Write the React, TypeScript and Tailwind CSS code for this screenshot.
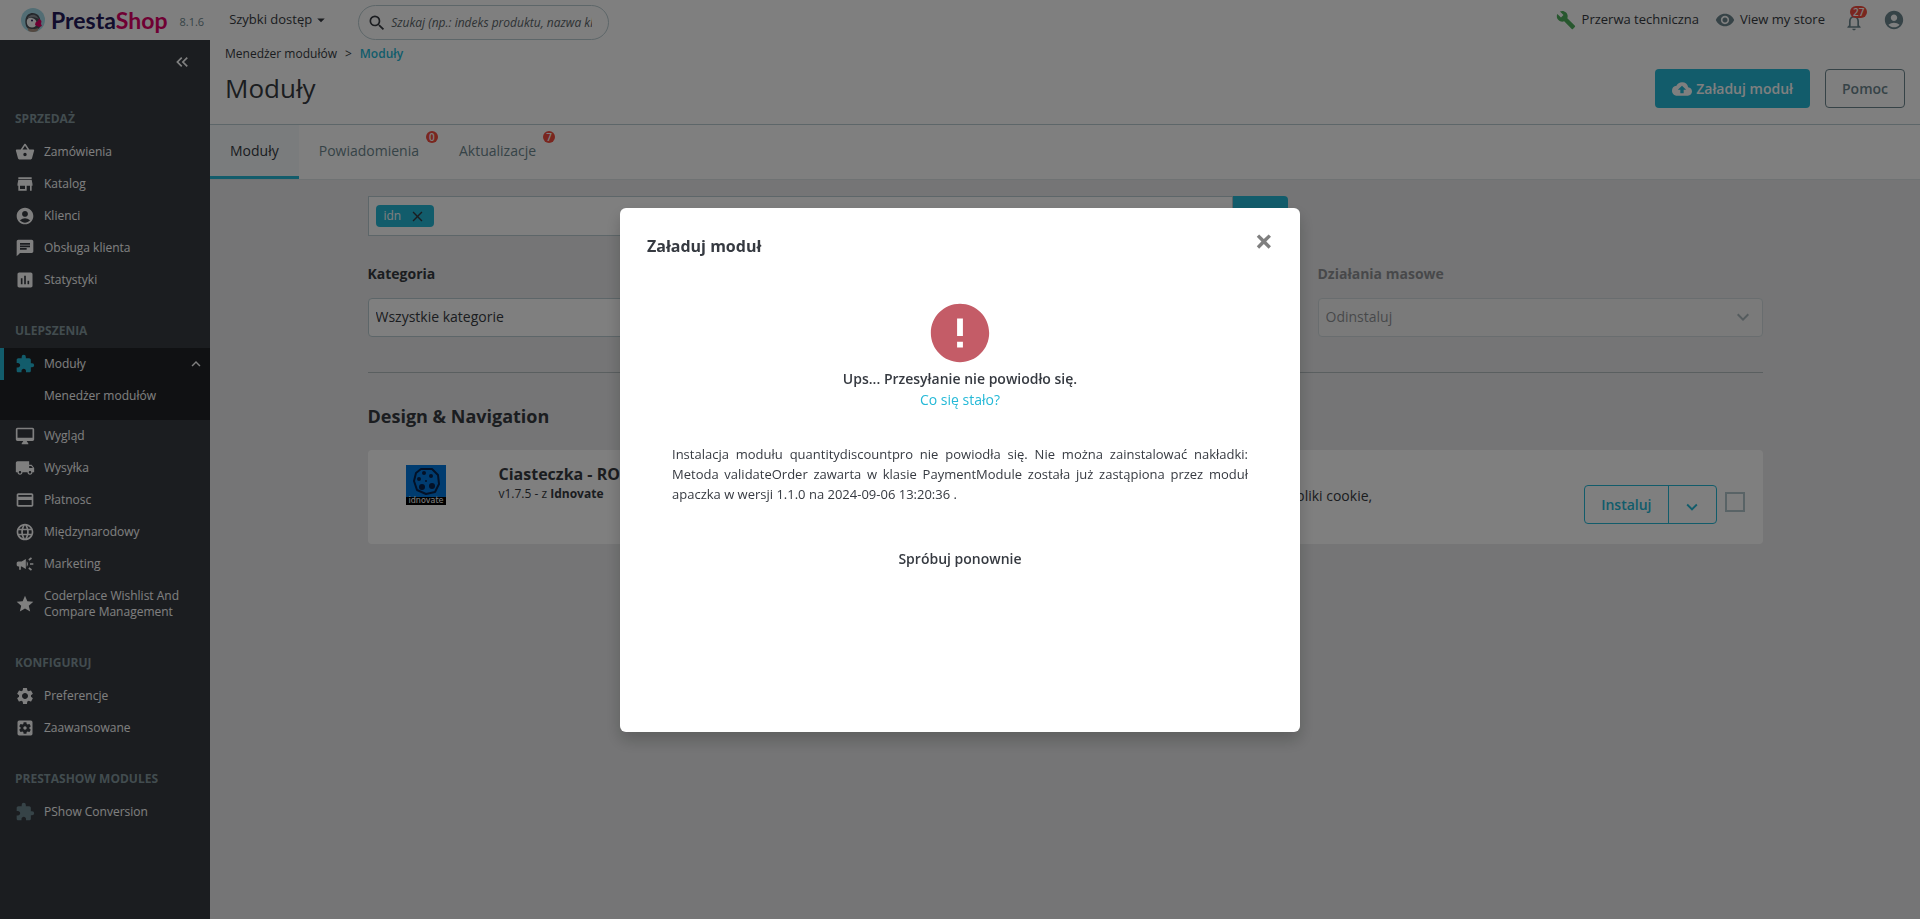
import type { ReactNode } from 'react'
import type { IconType } from 'react-icons'
import {
  MdAccountCircle,
  MdArrowDropDown,
  MdAssessment,
  MdBuild,
  MdCampaign,
  MdChat,
  MdClose,
  MdCloudUpload,
  MdCreditCard,
  MdError,
  MdExtension,
  MdKeyboardArrowDown,
  MdKeyboardArrowUp,
  MdKeyboardDoubleArrowLeft,
  MdLanguage,
  MdLocalShipping,
  MdNotificationsNone,
  MdOutlineDesktopMac,
  MdSearch,
  MdSettings,
  MdSettingsApplications,
  MdShoppingBasket,
  MdStar,
  MdStore,
  MdVisibility,
} from 'react-icons/md'

interface NavItem {
  label: string
  icon: IconType
  children?: string[]
  muted?: boolean
}

interface NavSection {
  title: string
  items: NavItem[]
}

const NAV: NavSection[] = [
  {
    title: 'SPRZEDAŻ',
    items: [
      { label: 'Zamówienia', icon: MdShoppingBasket },
      { label: 'Katalog', icon: MdStore },
      { label: 'Klienci', icon: MdAccountCircle },
      { label: 'Obsługa klienta', icon: MdChat },
      { label: 'Statystyki', icon: MdAssessment },
    ],
  },
  {
    title: 'ULEPSZENIA',
    items: [
      { label: 'Moduły', icon: MdExtension, children: ['Menedżer modułów'] },
      { label: 'Wygląd', icon: MdOutlineDesktopMac },
      { label: 'Wysyłka', icon: MdLocalShipping },
      { label: 'Płatnosc', icon: MdCreditCard },
      { label: 'Międzynarodowy', icon: MdLanguage },
      { label: 'Marketing', icon: MdCampaign },
      { label: 'Coderplace Wishlist And Compare Management', icon: MdStar },
    ],
  },
  {
    title: 'KONFIGURUJ',
    items: [
      { label: 'Preferencje', icon: MdSettings },
      { label: 'Zaawansowane', icon: MdSettingsApplications },
    ],
  },
  {
    title: 'PRESTASHOW MODULES',
    items: [{ label: 'PShow Conversion', icon: MdExtension, muted: true }],
  },
]

const TABS = [
  { label: 'Moduły', active: true },
  { label: 'Powiadomienia', count: 0 },
  { label: 'Aktualizacje', count: 7 },
]

function Mascot() {
  return (
    <svg viewBox="0 0 48 48" className="size-6" aria-hidden="true">
      <circle cx="24" cy="24" r="24" fill="#a4dbe8" />
      <path d="M11 38c-4-9-3-19 3-25 6-5 16-4 21 2 4 5 5 13 4 22l-4 5H15z" fill="#4a4f56" />
      <path d="M12 24c2-4 6-5 10-4 6 1 9 5 9 10 0 6-4 9-9 9-7 0-12-6-10-15z" fill="#fff" />
      <path d="M13 20c3-6 12-9 18-4l5 6c-7-4-15-5-23-2z" fill="#8b9197" />
      <circle cx="22" cy="25" r="2" fill="#251b5b" />
      <path d="M29 29l5-3 2-5 5 5-1 6 2 4-6 2-4-2-4-2z" fill="#df0067" />
      <path d="M13 40c7 3 15 3 22 0l-2 6a24 24 0 0 1-18 0z" fill="#a89080" />
    </svg>
  )
}

function Header() {
  return (
    <header className="flex h-10 items-center bg-white text-[13px] text-[#363a41]">
      <a href="#" className="ml-[21px] flex items-center gap-[6px]" aria-label="PrestaShop">
        <Mascot />
        <span className="font-[Lato,sans-serif] text-[23px] leading-6 font-bold text-[#251b5b]">
          Presta<span className="text-[#df0067]">Shop</span>
        </span>
      </a>
      <span className="mt-1 ml-3 text-[11px] text-[#6c868e]">8.1.6</span>
      <button className="ml-[25px] flex items-center">
        Szybki dostęp
        <MdArrowDropDown className="size-[18px]" />
      </button>
      <form className="ml-[28px] flex h-[35px] w-[251px] items-center self-end rounded-full border border-[#bbcdd2] pr-4 pl-2">
        <MdSearch className="mr-1 size-5 shrink-0" />
        <input
          type="text"
          aria-label="Szukaj"
          placeholder="Szukaj (np.: indeks produktu, nazwa klienta...)"
          className="min-w-0 flex-1 text-xs italic outline-none placeholder:text-[#5b6569]"
        />
      </form>
      <div className="ml-auto flex items-center">
        <a href="#" className="flex items-center gap-[6px]">
          <MdBuild className="size-5 text-[#4fae5c]" />
          Przerwa techniczna
        </a>
        <a href="#" className="ml-4 flex items-center gap-[5px]">
          <MdVisibility className="size-5 text-[#6c868e]" />
          View my store
        </a>
        <button aria-label="Powiadomienia" className="relative mt-1 ml-[19px]">
          <MdNotificationsNone className="size-5 text-[#6c868e]" />
          <span className="absolute -top-[6px] left-[6px] rounded-full bg-[#f54c3e] px-[3px] text-[10px] leading-3 font-semibold text-white">
            27
          </span>
        </button>
        <button aria-label="Konto" className="mr-[15px] ml-[19px]">
          <MdAccountCircle className="size-[22px] text-[#6c868e]" />
        </button>
      </div>
    </header>
  )
}

function NavRow({ item }: { item: NavItem }) {
  const Icon = item.icon
  const active = Boolean(item.children)

  return (
    <li className={active ? 'bg-[#202226] pb-2' : ''}>
      <a
        href="#"
        className={`flex min-h-8 items-center gap-[9px] border-l-4 py-2 pr-[5px] pl-[11px] ${active ? 'border-[#25b9d7]' : 'border-transparent'}`}
      >
        <Icon className={`size-5 shrink-0 -my-1 ${active ? 'text-[#25b9d7]' : item.muted ? 'text-[#6c868e]' : ''}`} />
        <span className="flex-1">{item.label}</span>
        {active && <MdKeyboardArrowUp className="-my-1 size-[18px]" />}
      </a>
      {item.children?.map((child) => (
        <a key={child} href="#" className="block py-2 pl-11">
          {child}
        </a>
      ))}
    </li>
  )
}

function Sidebar() {
  return (
    <nav className="w-[210px] shrink-0 bg-[#363a41] text-xs leading-4 text-white">
      <div className="flex h-11 items-center justify-end pr-[18px]">
        <button aria-label="Zwiń menu">
          <MdKeyboardDoubleArrowLeft className="size-5" />
        </button>
      </div>
      {NAV.map((section) => (
        <section key={section.title}>
          <h2 className="flex h-[52px] items-end pb-2 pl-[15px] leading-[18px] font-bold text-[#84999f]">{section.title}</h2>
          <ul>
            {section.items.map((item) => (
              <NavRow key={item.label} item={item} />
            ))}
          </ul>
        </section>
      ))}
    </nav>
  )
}

function PageHeader() {
  return (
    <div className="bg-white">
      <div className="flex items-end justify-between border-b border-[#bbcdd2] px-[15px] pt-[5px] pb-4">
        <div>
          <nav className="flex gap-2 text-xs leading-[18px]">
            <a href="#">Menedżer modułów</a>
            <span>&gt;</span>
            <a href="#" className="font-semibold text-[#25b9d7]">Moduły</a>
          </nav>
          <h1 className="mt-[5px] text-[26px] leading-10">Moduły</h1>
        </div>
        <div className="flex gap-[15px] text-sm font-semibold">
          <button className="flex h-[39px] items-center gap-1 rounded bg-[#25b9d7] px-[17px] text-white">
            <MdCloudUpload className="size-5" />
            Załaduj moduł
          </button>
          <button className="h-[39px] rounded border border-[#6c868e] px-4 text-[#6c868e]">Pomoc</button>
        </div>
      </div>
      <div className="flex h-[55px] border-b border-[#dfe5e7] text-sm">
        {TABS.map((tab) => (
          <a
            key={tab.label}
            href="#"
            className={`relative flex items-center border-b-[3px] px-5 pt-px ${tab.active ? 'border-[#25b9d7] bg-[#f4f9fb]' : 'border-transparent text-[#6c868e]'}`}
          >
            {tab.label}
            {tab.count !== undefined && (
              <span className="absolute top-[6px] right-px size-3 rounded-full bg-[#f54c3e] text-center text-[10px] leading-3 font-semibold text-white">
                {tab.count}
              </span>
            )}
          </a>
        ))}
      </div>
    </div>
  )
}

interface FilterSelectProps {
  id: string
  label: string
  value: string
  disabled?: boolean
  className?: string
}

function FilterSelect({ id, label, value, disabled = false, className = '' }: FilterSelectProps) {
  return (
    <div className={`text-sm ${disabled ? 'opacity-50' : ''} ${className}`}>
      <label htmlFor={id} className="block leading-5 font-bold">{label}</label>
      <div className="relative mt-[14px]">
        <select
          id={id}
          disabled={disabled}
          className="h-[39px] w-full appearance-none rounded border border-[#bbcdd2] bg-white px-[7px] pb-px opacity-100"
        >
          <option>{value}</option>
        </select>
        <MdKeyboardArrowDown className="pointer-events-none absolute top-[7px] right-2 size-6 text-[#6c868e]" />
      </div>
    </div>
  )
}

function ModuleLogo() {
  return (
    <svg viewBox="0 0 40 40" className="ml-[38px] size-10 shrink-0" role="img" aria-label="idnovate">
      <rect width="40" height="32" fill="#0078e0" />
      <rect y="32" width="40" height="8" fill="#000" />
      <path d="M15 4l11 0 6 6 1 9-4 8-9 2-9-4-3-9 2-8z" fill="none" stroke="#06224d" strokeWidth="2" strokeLinejoin="round" />
      <g fill="#06224d">
        <circle cx="18" cy="8" r="2" />
        <circle cx="25" cy="11" r="2" />
        <circle cx="13" cy="14" r="2" />
        <circle cx="20" cy="16" r="1" />
        <circle cx="16" cy="22" r="3" />
        <circle cx="26" cy="21" r="3" />
      </g>
      <text x="20" y="38" fill="#fff" fontSize="8" textAnchor="middle" fontFamily="DejaVu Sans, sans-serif">
        idnovate
      </text>
    </svg>
  )
}

function ModuleCard() {
  return (
    <article className="flex h-[94px] items-start rounded bg-white pt-[15px]">
      <ModuleLogo />
      <div className="-mt-px ml-[53px] w-[360px]">
        <h3 className="text-base leading-5 font-bold">Ciasteczka - RODO</h3>
        <p className="text-xs leading-5">
          v1.7.5 - z <b>Idnovate</b>
        </p>
      </div>
      <p className="mt-[21px] flex-1 pr-[212px] text-right text-sm leading-5">pliki cookie,</p>
      <div className="mt-5 mr-[18px] flex gap-2">
        <div className="flex h-[39px] rounded border border-[#25b9d7] text-sm font-semibold text-[#25b9d7]">
          <button className="px-4">Instaluj</button>
          <button aria-label="Więcej" className="flex w-12 items-center justify-center border-l border-[#25b9d7] pt-1">
            <MdKeyboardArrowDown className="size-[22px]" />
          </button>
        </div>
        <input
          type="checkbox"
          aria-label="Wybierz moduł"
          className="mt-[7px] size-5 appearance-none border-2 border-[#b3c7cd]"
        />
      </div>
    </article>
  )
}

function ModuleList() {
  return (
    <div className="mx-auto w-10/12 px-[15px] pt-4">
      <div className="grid grid-cols-3 gap-x-[30px]">
        <div className="col-span-2 flex h-10">
          <div className="flex flex-1 items-center border border-[#bbcdd2] bg-white px-[7px]">
            <span className="flex h-[22px] items-center gap-2 rounded-sm bg-[#25b9d7] px-2 text-xs text-white">
              idn
              <button aria-label="Usuń" className="text-[#363a41]">
                <MdClose className="size-[17px]" />
              </button>
            </span>
            <input type="text" aria-label="Szukaj modułów" className="min-w-0 flex-1 outline-none" />
          </div>
          <button aria-label="Szukaj" className="flex w-[55px] items-center justify-center rounded-r bg-[#25b9d7] text-white">
            <MdSearch className="size-5" />
          </button>
        </div>
        <FilterSelect id="category" label="Kategoria" value="Wszystkie kategorie" className="col-start-1 mt-7" />
        <FilterSelect id="bulk" label="Działania masowe" value="Odinstaluj" disabled className="col-start-3 mt-7" />
      </div>
      <hr className="mt-[35px] border-[#b5bec1]" />
      <h2 className="mt-[31px] mb-[22px] text-lg leading-6 font-bold">Design &amp; Navigation</h2>
      <ModuleCard />
    </div>
  )
}

function Backdrop({ children }: { children: ReactNode }) {
  return <div className="fixed inset-0 flex items-start justify-center bg-black/50 pt-52">{children}</div>
}

function UploadErrorDialog() {
  return (
    <Backdrop>
      <div
        role="dialog"
        aria-labelledby="upload-title"
        className="w-[680px] rounded-md bg-white px-[27px] pt-[26px] pb-[163px] text-sm text-[#363a41] shadow-[0_8px_16px_rgba(0,0,0,0.2)]"
      >
        <div className="flex items-start justify-between">
          <h2 id="upload-title" className="text-base leading-6 font-bold">Załaduj moduł</h2>
          <button aria-label="Zamknij" className="-mt-[5px] text-[32px] leading-6 font-bold text-[#7f7f7f]">×</button>
        </div>
        <div className="mt-10 px-[25px] text-center">
          <MdError className="mx-auto size-[70px] text-[#c45c67]" />
          <p className="leading-[21px] font-semibold">Ups... Przesyłanie nie powiodło się.</p>
          <a href="#" className="block leading-[21px] text-[#25b9d7]">Co się stało?</a>
          <p className="mt-[34px] text-justify text-[13px] leading-5">
            Instalacja modułu quantitydiscountpro nie powiodła się. Nie można zainstalować nakładki: Metoda validateOrder zawarta
            w klasie PaymentModule została już zastąpiona przez moduł apaczka w wersji 1.1.0 na 2024-09-06 13:20:36 .
          </p>
          <button className="mt-11 leading-[21px] font-semibold">Spróbuj ponownie</button>
        </div>
      </div>
    </Backdrop>
  )
}

export default function App() {
  return (
    <div className="flex min-h-screen flex-col bg-[#eaebec] font-['Open_Sans',sans-serif] text-[#363a41]">
      <Header />
      <div className="flex flex-1">
        <Sidebar />
        <main className="min-w-0 flex-1">
          <PageHeader />
          <ModuleList />
        </main>
      </div>
      <UploadErrorDialog />
    </div>
  )
}
